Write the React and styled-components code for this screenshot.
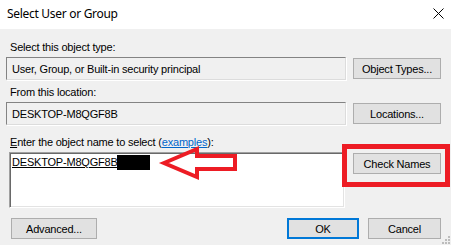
import React from 'react'
import styled, { createGlobalStyle } from 'styled-components'

const GlobalStyle = createGlobalStyle`
  html, body {
    margin: 0;
    padding: 0;
    background: #f0f0f0;
  }
  * {
    box-sizing: border-box;
  }
`

const Window = styled.div`
  position: relative;
  width: 451px;
  height: 245px;
  overflow: hidden;
  background: #f0f0f0;
  font-family: "Liberation Sans", Arial, sans-serif;
  font-size: 11px;
  letter-spacing: -0.2px;
  color: #000;
  display: flex;
  flex-direction: column;
`

const TitleBar = styled.div`
  height: 29px;
  flex: none;
  background: #fff;
  display: flex;
  align-items: center;
  justify-content: space-between;
  padding: 0 1px 0 7px;
`

const Title = styled.span`
  font-family: "Noto Sans", "Open Sans", sans-serif;
  font-size: 12px;
  letter-spacing: -0.3px;
  padding-bottom: 2px;
`

const CloseBtn = styled.span`
  width: 24px;
  height: 24px;
  display: flex;
  align-items: center;
  justify-content: center;
  margin-bottom: 3px;
`

const Body = styled.div`
  flex: 1;
  display: flex;
  flex-direction: column;
  padding: 12px 10px 0 6px;
`

const Label = styled.div`
  line-height: 13px;
  height: 13px;
  margin: ${p => p.$top || 0}px 0 3px 4px;
  white-space: nowrap;
`

const Mnemonic = styled.span`
  text-decoration: underline;
`

const Link = styled.span`
  color: #0066cc;
  text-decoration: underline;
`

const Row = styled.div`
  display: flex;
  align-items: flex-start;
  gap: ${p => p.$gap || 7}px;
  padding-left: ${p => p.$indent || 0}px;
`

const ReadOnlyField = styled.div`
  flex: 1;
  height: 23px;
  border: 1px solid;
  border-color: #838383 #dcdcdc #dcdcdc #838383;
  box-shadow: 1px 1px 0 #fff;
  display: flex;
  align-items: center;
  padding-left: 5px;
  white-space: nowrap;
`

const NameBox = styled.div`
  position: relative;
  flex: 1;
  height: 56px;
  background: #fff;
  border: 1px solid;
  border-color: #a0a0a0 #fff #fff #a0a0a0;
  box-shadow: inset 1px 1px 0 #696969, inset -1px -1px 0 #e3e3e3;
  padding: 2px 0 0 2px;
  white-space: nowrap;
  line-height: 15px;
`

const Entered = styled.span`
  text-decoration: underline;
`

const Redacted = styled.span`
  display: inline-block;
  vertical-align: top;
  width: 33px;
  height: 15px;
  margin-left: -3px;
  background: #000;
`

const Button = styled.button`
  flex: none;
  width: ${p => p.$w || 88}px;
  height: 21px;
  margin-top: ${p => p.$mt || 0}px;
  background: #e1e1e1;
  border: ${p => (p.$primary ? '2px solid #0078d7' : '1px solid #adadad')};
  font-family: "Liberation Sans", Arial, sans-serif;
  font-size: 11px;
  letter-spacing: -0.2px;
  color: #000;
  padding: 0;
  display: flex;
  align-items: center;
  justify-content: center;
`

const Footer = styled.div`
  display: flex;
  align-items: center;
  margin-top: 10px;
  padding-left: 5px;
`

const Spacer = styled.div`
  flex: 1;
`

const FooterGap = styled.div`
  width: 9px;
`

const Highlight = styled.div`
  position: absolute;
  left: 342px;
  top: 144px;
  width: 108px;
  height: 43px;
  border: 5px solid #ed1c24;
  pointer-events: none;
`

const ArrowLayer = styled.svg`
  position: absolute;
  left: 0;
  top: 0;
  pointer-events: none;
`

const Grip = styled.svg`
  position: absolute;
  right: 0;
  bottom: 0;
`

export default function App() {
  return (
    <>
      <GlobalStyle />
      <Window>
        <TitleBar>
          <Title>Select User or Group</Title>
          <CloseBtn>
            <svg width="11" height="11" viewBox="0 0 11 11">
              <path d="M0.5 0.5 L10.5 10.5 M10.5 0.5 L0.5 10.5" stroke="#000" strokeWidth="1" />
            </svg>
          </CloseBtn>
        </TitleBar>
        <Body>
          <Label>Select this object type:</Label>
          <Row>
            <ReadOnlyField>User, Group, or Built-in security principal</ReadOnlyField>
            <Button $mt={1}>Object Types...</Button>
          </Row>

          <Label $top={6}>From this location:</Label>
          <Row>
            <ReadOnlyField>DESKTOP-M8QGF8B</ReadOnlyField>
            <Button $mt={1}>Locations...</Button>
          </Row>

          <Label $top={11}>
            <Mnemonic>E</Mnemonic>nter the object name to select (<Link>examples</Link>):
          </Label>
          <Row $gap={8} $indent={3}>
            <NameBox>
              <Entered>DESKTOP-M8QGF8B\</Entered>
              <Redacted />
            </NameBox>
            <Button $mt={1}>Check Names</Button>
          </Row>

          <Footer>
            <Button $w={86}>Advanced...</Button>
            <Spacer />
            <Button $w={72} $primary>OK</Button>
            <FooterGap />
            <Button $w={73}>Cancel</Button>
          </Footer>
        </Body>

        <Highlight />
        <ArrowLayer width="451" height="245">
          <polygon
            points="164,163 197,149 197,156 235,156 235,169 197,169 197,177"
            fill="none"
            stroke="#ed1c24"
            strokeWidth="4"
            strokeLinejoin="miter"
          />
        </ArrowLayer>
        <Grip width="12" height="12" viewBox="0 0 12 12">
          <rect x="9" y="3" width="2" height="2" fill="#bcbcbc" />
          <rect x="9" y="6" width="2" height="2" fill="#bcbcbc" />
          <rect x="6" y="6" width="2" height="2" fill="#bcbcbc" />
          <rect x="9" y="9" width="2" height="2" fill="#bcbcbc" />
          <rect x="6" y="9" width="2" height="2" fill="#bcbcbc" />
          <rect x="3" y="9" width="2" height="2" fill="#bcbcbc" />
        </Grip>
      </Window>
    </>
  )
}
